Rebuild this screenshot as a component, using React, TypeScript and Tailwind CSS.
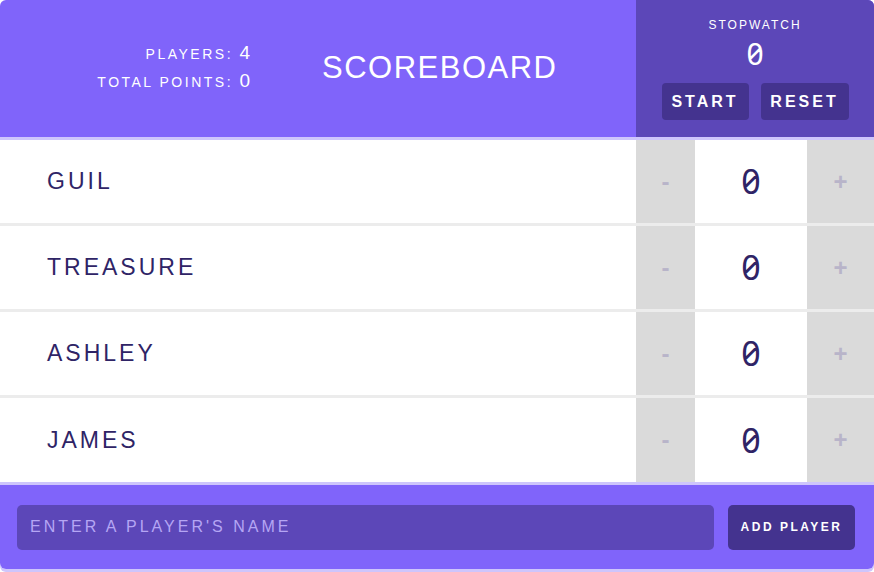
const players = ["Guil", "Treasure", "Ashley", "James"];

const digits = "font-['Noto_Sans',sans-serif] [font-feature-settings:'zero']";

function PlayerRow({ name }: { name: string }) {
  return (
    <div className="flex h-[86px] border-b-[3px] border-[#ececec] last:border-b-0 last:h-[84px]">
      <div className="flex flex-1 items-center pl-[47px] text-[23px] uppercase tracking-[3px] text-[#2f2466]">
        {name}
      </div>
      <button className="w-[59px] bg-[#dadada] text-[24px] font-bold text-[#b8b4c9]">-</button>
      <div className={`flex w-[112px] items-center justify-center bg-white text-[34px] text-[#2f2466] ${digits}`}>
        0
      </div>
      <button className="w-[67px] bg-[#dadada] text-[24px] font-bold text-[#b8b4c9]">+</button>
    </div>
  );
}

export default function App() {
  return (
    <div className="h-[572px] w-[874px] bg-white font-['Liberation_Sans',Arial,sans-serif]">
      <div className="overflow-hidden rounded-[6px] shadow-[0_3px_0_#cec5fc]">
        <header className="flex h-[140px] border-b-[3px] border-[#cec5fc] bg-[#8064fa] text-white">
          <div className="flex flex-1 items-center">
            <div className="-mt-[4px] w-[250px] text-right leading-none">
              <div className="mb-[9px] text-[14px] uppercase tracking-[2.5px]">
                Players: <span className="text-[19px] tracking-normal">4</span>
              </div>
              <div className="text-[14px] uppercase tracking-[2.5px]">
                Total Points: <span className="text-[19px] tracking-normal">0</span>
              </div>
            </div>
            <h1 className="ml-[72px] text-[31px] uppercase tracking-[1.5px]">Scoreboard</h1>
          </div>
          <div className="flex w-[238px] flex-col items-center bg-[#5c47b8] pt-[16px]">
            <div className="text-[12px] uppercase tracking-[2px]">Stopwatch</div>
            <div className={`mt-[2px] text-[30px] leading-[35px] ${digits}`}>0</div>
            <div className="mt-[12px] flex gap-[12px]">
              <button className="h-[37px] w-[87px] rounded-[4px] bg-[#44338f] text-[16px] font-bold uppercase tracking-[3px] text-white">
                Start
              </button>
              <button className="h-[37px] w-[88px] rounded-[4px] bg-[#44338f] text-[16px] font-bold uppercase tracking-[3px] text-white">
                Reset
              </button>
            </div>
          </div>
        </header>
        <div className="border-b-[3px] border-[#cec5fc]">
          {players.map((p) => (
            <PlayerRow key={p} name={p} />
          ))}
        </div>
        <form className="flex h-[84px] items-center gap-[14px] bg-[#8064fa] pl-[17px] pr-[19px]">
          <input
            className="h-[45px] flex-1 rounded-[5px] bg-[#5c47b8] px-[13px] text-[16px] uppercase tracking-[3px] text-white outline-none placeholder:text-[#b5a6f4]"
            placeholder="Enter a player's name"
          />
          <button
            type="button"
            className="h-[45px] w-[127px] rounded-[5px] bg-[#44338f] text-[12px] font-bold uppercase tracking-[2.5px] text-white"
          >
            Add Player
          </button>
        </form>
      </div>
    </div>
  );
}
